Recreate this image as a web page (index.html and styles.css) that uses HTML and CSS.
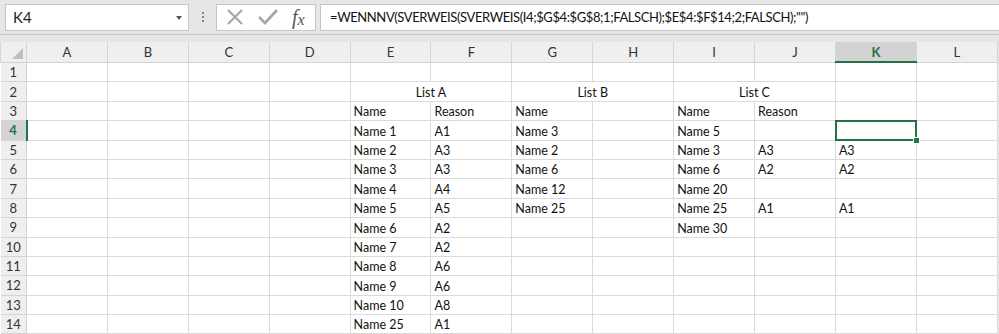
FILE: index.html
```html
<!DOCTYPE html>
<html lang="de">
<head>
    <meta charset="UTF-8">
    <title>Mappe1 - Excel</title>
    <link rel="stylesheet" href="styles.css">
</head>
<body>
    <!-- Formula bar -->
    <div class="formula-bar">
        <div class="name-box">
            <span>K4</span>
            <span class="drop"></span>
        </div>
        <div class="grip"><i></i><i></i><i></i></div>
        <div class="fx-box">
            <svg class="ico" width="20" height="20" viewBox="0 0 20 20">
                <path d="M3 3 L17 17 M17 3 L3 17" stroke="#a6a6a6" stroke-width="2" fill="none"/>
            </svg>
            <svg class="ico" width="22" height="20" viewBox="0 0 22 20">
                <path d="M2 10 L8 16 L20 3" stroke="#a6a6a6" stroke-width="2.6" fill="none"/>
            </svg>
            <span class="fx">f<sub>x</sub></span>
        </div>
        <div class="formula">=WENNNV(SVERWEIS(SVERWEIS(I4;$G$4:$G$8;1;FALSCH);$E$4:$F$14;2;FALSCH);"")</div>
    </div>

    <!-- Sheet -->
    <table class="sheet" id="sheet">
        <colgroup>
            <col class="c-head">
            <col><col><col><col><col><col><col><col><col><col><col><col>
        </colgroup>
        <thead>
            <tr>
                <th class="corner"><span class="tri"></span></th>
                <th>A</th><th>B</th><th>C</th><th>D</th><th>E</th><th>F</th>
                <th>G</th><th>H</th><th>I</th><th>J</th><th class="active">K</th><th>L</th>
            </tr>
        </thead>
        <tbody id="rows"></tbody>
    </table>

    <script>
        // cell values per row: columns A..L
        const data = {
            3: { E: 'Name', F: 'Reason', G: 'Name', I: 'Name', J: 'Reason' },
            4: { E: 'Name 1', F: 'A1', G: 'Name 3', I: 'Name 5' },
            5: { E: 'Name 2', F: 'A3', G: 'Name 2', I: 'Name 3', J: 'A3', K: 'A3' },
            6: { E: 'Name 3', F: 'A3', G: 'Name 6', I: 'Name 6', J: 'A2', K: 'A2' },
            7: { E: 'Name 4', F: 'A4', G: 'Name 12', I: 'Name 20' },
            8: { E: 'Name 5', F: 'A5', G: 'Name 25', I: 'Name 25', J: 'A1', K: 'A1' },
            9: { E: 'Name 6', F: 'A2', I: 'Name 30' },
            10: { E: 'Name 7', F: 'A2' },
            11: { E: 'Name 8', F: 'A6' },
            12: { E: 'Name 9', F: 'A6' },
            13: { E: 'Name 10', F: 'A8' },
            14: { E: 'Name 25', F: 'A1' }
        };
        const cols = 'ABCDEFGHIJKL'.split('');
        const body = document.getElementById('rows');

        for (let r = 1; r <= 14; r++) {
            const tr = document.createElement('tr');
            const th = document.createElement('th');
            th.textContent = r;
            if (r === 4) th.classList.add('active');
            tr.appendChild(th);

            if (r === 2) {
                tr.innerHTML += '<td></td><td></td><td></td><td></td>' +
                    '<td colspan="2" class="title">List A</td>' +
                    '<td colspan="2" class="title">List B</td>' +
                    '<td colspan="2" class="title">List C</td>' +
                    '<td></td><td></td>';
            } else {
                const row = data[r] || {};
                cols.forEach(c => {
                    const td = document.createElement('td');
                    td.textContent = row[c] || '';
                    if (r === 4 && c === 'K') {
                        td.classList.add('selected');
                        td.innerHTML = '<span class="handle"></span>';
                    }
                    tr.appendChild(td);
                });
            }
            body.appendChild(tr);
        }
    </script>
</body>
</html>
```

FILE: styles.css
```css
body {
    margin: 0;
    padding: 0;
    background-color: #e6e6e6;
    font-family: Lato, "Open Sans", sans-serif;
    color: #111;
    overflow: hidden;
}
.formula-bar {
    display: flex;
    align-items: center;
    height: 34px;
    padding: 0 0 0 5px;
    border-bottom: 1px solid #c8c8c8;
    margin-bottom: 7px;
}
.name-box {
    display: flex;
    align-items: center;
    justify-content: space-between;
    box-sizing: border-box;
    width: 184px;
    height: 27px;
    padding: 0 6px 0 7px;
    background-color: #fff;
    border: 1px solid #c6c6c6;
    font-size: 15px;
    color: #222;
}
.drop {
    width: 0;
    height: 0;
    border-left: 3px solid transparent;
    border-right: 3px solid transparent;
    border-top: 4px solid #555;
    margin-top: 1px;
}
.grip {
    display: flex;
    flex-direction: column;
    gap: 2px;
    margin: 0 12px 0 13px;
}
.grip i {
    display: block;
    width: 2px;
    height: 2px;
    background-color: #888;
}
.fx-box {
    display: flex;
    align-items: center;
    box-sizing: border-box;
    width: 100px;
    height: 27px;
    padding: 0 0 0 8px;
    gap: 12px;
    background-color: #fff;
    border: 1px solid #c6c6c6;
}
.fx {
    font-family: "Liberation Serif", serif;
    font-style: italic;
    font-size: 20px;
    color: #555;
    margin-left: 1px;
}
.fx sub {
    font-size: 16px;
    vertical-align: -1px;
}
.formula {
    flex: 1;
    box-sizing: border-box;
    height: 27px;
    line-height: 25px;
    margin-left: 4px;
    padding-left: 9px;
    background-color: #fff;
    border: 1px solid #c6c6c6;
    border-right: none;
    font-size: 13px;
    letter-spacing: -0.4px;
    white-space: nowrap;
    color: #111;
}
.sheet {
    table-layout: fixed;
    border-collapse: collapse;
    width: 996.8px;
    background-color: #fff;
    font-size: 12.5px;
}
.sheet col {
    width: 80.9px;
}
.sheet col.c-head {
    width: 26px;
}
.sheet th {
    background-color: #efefef;
    border: 1px solid #d4d4d4;
    font-weight: normal;
    color: #333;
    font-size: 13px;
    padding: 0;
    text-align: center;
}
.sheet thead th {
    height: 19px;
    border-top: none;
}
.sheet tbody th {
    height: 18px;
    border-left: none;
}
.sheet th.corner {
    position: relative;
}
.tri {
    position: absolute;
    right: 3px;
    bottom: 3px;
    width: 0;
    height: 0;
    border-left: 11px solid transparent;
    border-bottom: 11px solid #c0c0c0;
}
.sheet th.active {
    background-color: #d3d3d3;
    color: #217346;
    font-weight: bold;
}
.sheet thead th.active {
    border-bottom: 2px solid #217346;
}
.sheet tbody th.active {
    border-right: 2px solid #217346;
}
.sheet td {
    height: 18.4px;
    padding: 0 3px;
    border: 1px solid #dadada;
    white-space: nowrap;
    overflow: hidden;
    vertical-align: bottom;
    line-height: 17px;
}
.sheet td.title {
    text-align: center;
}
.sheet td.selected {
    position: relative;
    overflow: visible;
}
.selected::after {
    content: "";
    position: absolute;
    left: -1px;
    top: -1px;
    right: -1px;
    bottom: -1px;
    border: 2px solid #217346;
}
.handle {
    position: absolute;
    right: -4px;
    bottom: -4px;
    width: 5px;
    height: 5px;
    background-color: #217346;
    border: 1px solid #fff;
    z-index: 1;
}
```
